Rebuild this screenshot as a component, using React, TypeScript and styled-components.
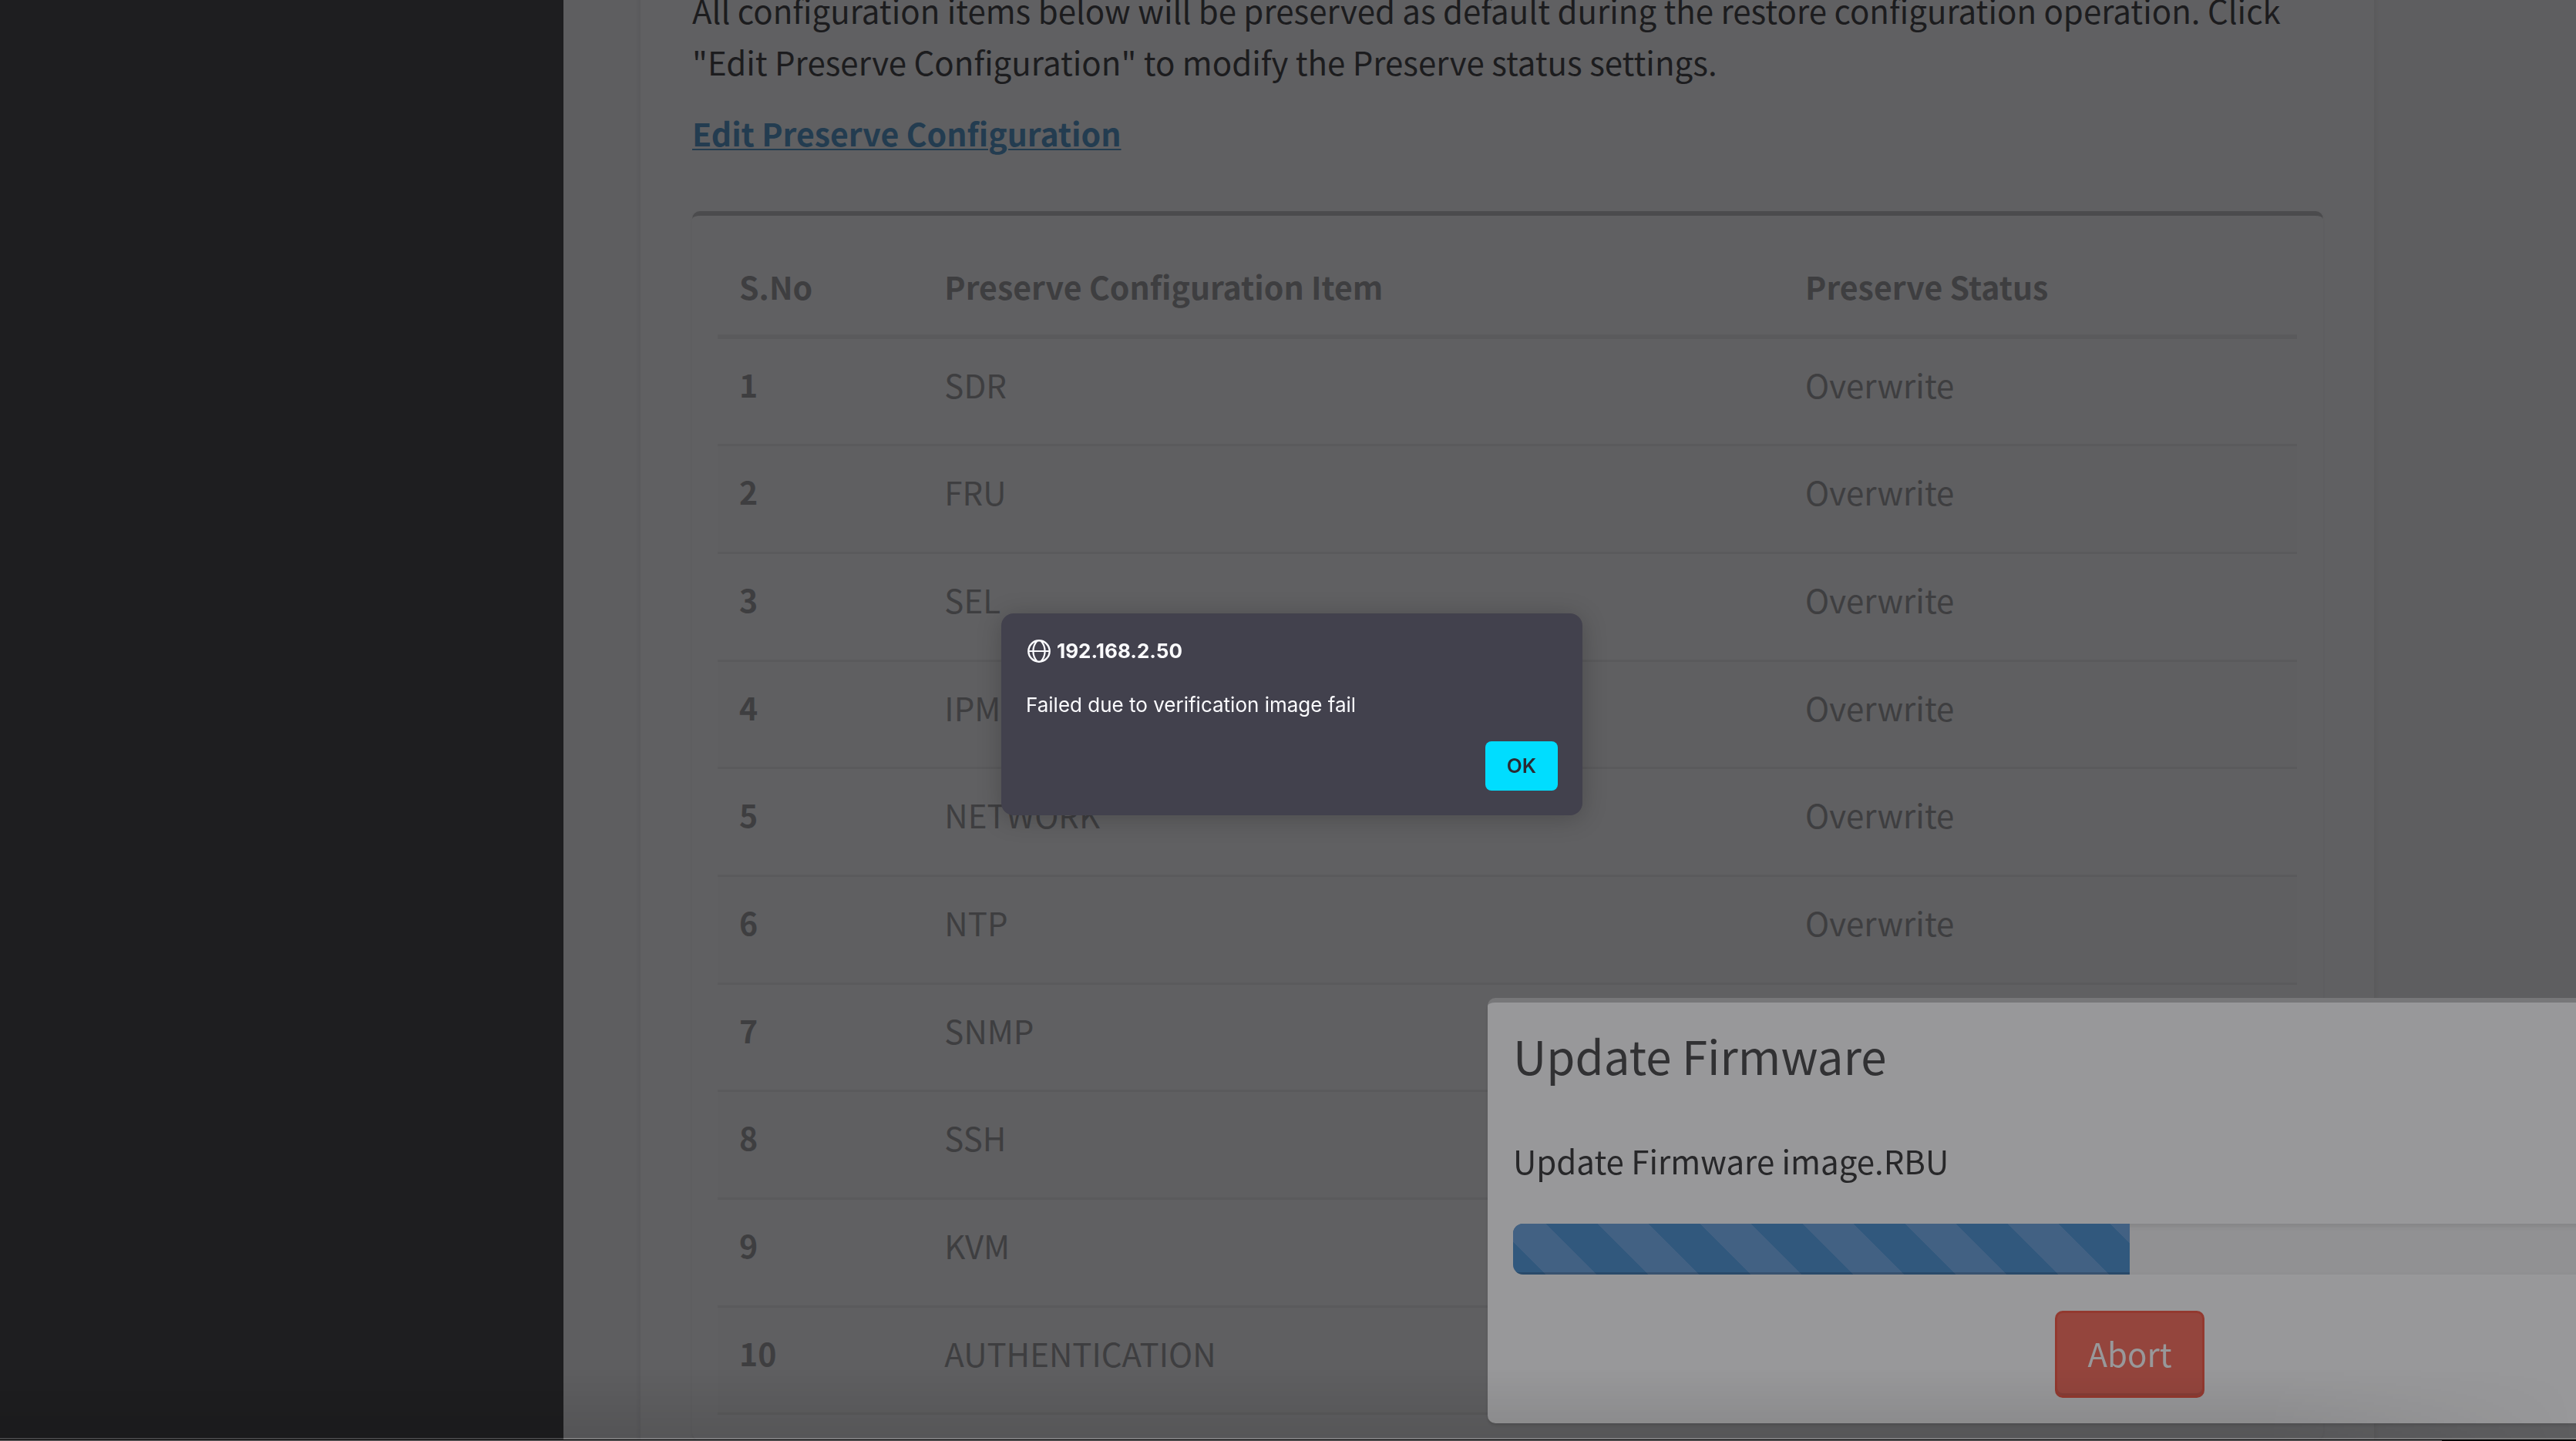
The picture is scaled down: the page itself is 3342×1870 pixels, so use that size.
import React from "react";
import styled, { createGlobalStyle } from "styled-components";

const GlobalStyle = createGlobalStyle`
  *, *::before, *::after { box-sizing: border-box; }
  html, body { margin: 0; overflow: hidden; background: #5e5e60; }
  body { font-family: "Noto Sans CJK JP", "Noto Sans CJK SC", "Open Sans", sans-serif; font-size: 42px; line-height: 67px; }
  p, h3 { margin: 0; font-weight: 400; }
`;

const Shell = styled.div`
  display: flex;
  height: 100vh;
  overflow: hidden;
`;

const Sidebar = styled.aside`
  flex: 0 0 731px;
  background: #1e1e20;
`;

const Content = styled.main`
  flex: 1;
  min-width: 0;
  padding: 0 262px 0 100px;
  background: #5e5e60;
`;

const Panel = styled.section`
  margin-top: -21px;
  padding: 0 66px 67px 67px;
  background: #606062;
  box-shadow: 0 3px 3px 3px #5b5b5d;
`;

const Description = styled.p`
  color: #1c1c1e;
`;

const EditLink = styled.a`
  display: inline-block;
  margin: 26px 0 68px;
  color: #233c50;
  font-size: 41px;
  font-weight: 700;
  text-decoration: underline;
  text-decoration-thickness: 2px;
  text-underline-offset: 3px;
`;

const Card = styled.div`
  padding: 33px 34px 33px 33px;
  border-top: 6px solid #4b4b4d;
  border-radius: 10px;
  background: #606062;
  box-shadow: 0 3px 3px #5c5c5e;
`;

const Table = styled.table`
  width: 100%;
  border-collapse: separate;
  border-spacing: 0;
  table-layout: fixed;
  color: #3e3e40;
  th { font-size: 41px; }
`;

const HeadCell = styled.th<{ $width: string }>`
  width: ${(p) => p.$width};
  height: 127px;
  padding: 25px 27px 0 28px;
  border-bottom: 6px solid #5a5a5c;
  text-align: left;
  vertical-align: top;
`;

const Row = styled.tr`
  height: 140px;
  &:nth-child(3n + 1) { height: 139px; }
  &:nth-child(even) { background: #5f5f61; }
  > * {
    padding: 25px 27px 0 28px;
    border-bottom: 3px solid #5a5a5c;
    text-align: left;
    vertical-align: top;
  }
`;

const UpdateCard = styled.section`
  position: fixed;
  left: 1930px;
  bottom: 23px;
  width: 1666px;
  padding: 34px 33px 33px;
  border-top: 6px solid #777779;
  border-radius: 10px;
  background: #98989a;
  box-shadow: 0 3px 3px rgba(0, 0, 0, 0.1);
`;

const UpdateTitle = styled.h3`
  color: #313133;
  font-size: 60px;
  line-height: 67px;
`;

const UpdateText = styled.p`
  margin: 70px 0 49px;
  color: #272729;
`;

const Track = styled.div`
  height: 66px;
  overflow: hidden;
  border-radius: 13px;
  background: #919193;
  box-shadow: inset 0 3px 6px rgba(0, 0, 0, 0.1);
`;

const Bar = styled.div`
  height: 100%;
  background-color: #31587d;
  background-image: linear-gradient(
    45deg,
    #426183 25%,
    transparent 25%,
    transparent 50%,
    #426183 50%,
    #426183 75%,
    transparent 75%
  );
  background-size: 133px 133px;
  background-position: -24px 0;
  box-shadow: inset 0 -3px 0 rgba(0, 0, 0, 0.15);
`;

const Actions = styled.div`
  display: flex;
  justify-content: center;
  margin-top: 47px;
`;

const AbortButton = styled.button`
  width: 194px;
  height: 113px;
  padding: 0 0 4px;
  border: 3px solid #93392f;
  border-radius: 10px;
  background: #94453d;
  box-shadow: inset 0 -3px 0 rgba(0, 0, 0, 0.09);
  color: #98989a;
  font: inherit;
`;

const Alert = styled.div`
  position: fixed;
  left: 1299px;
  top: 796px;
  width: 754px;
  padding: 33px 32px 32px;
  border-radius: 16px;
  background: #42414d;
  box-shadow: 0 4px 32px rgba(0, 0, 0, 0.22);
  color: #fbfbfe;
  font-family: Inter, "Liberation Sans", sans-serif;
  font-size: 26px;
  line-height: 32px;
`;

const AlertOrigin = styled.div`
  display: flex;
  align-items: center;
  gap: 8px;
  padding-left: 2px;
  font-weight: 700;
`;

const AlertMessage = styled.p`
  margin: 38px 0 31px;
`;

const AlertActions = styled.div`
  display: flex;
  justify-content: flex-end;
`;

const OkButton = styled.button`
  width: 94px;
  height: 64px;
  padding: 0;
  border: 0;
  border-radius: 8px;
  background: #00ddff;
  color: #2b2a33;
  font: inherit;
  font-weight: 600;
`;

const BottomShade = styled.div`
  position: fixed;
  inset: auto 0 4px 0;
  height: 90px;
  background: linear-gradient(to bottom, transparent, rgba(0, 0, 0, 0.1));
  mask-image: linear-gradient(to right, #000 88%, transparent);
  pointer-events: none;
`;

const WindowEdge = styled.div`
  position: fixed;
  inset: auto 0 0 0;
  height: 4px;
  border-top: 2px solid rgba(255, 255, 255, 0.17);
  background: linear-gradient(to right, #6c6a6c 3168px, #000 3168px) bottom / 100% 1px no-repeat padding-box,
    linear-gradient(#000, #000) padding-box;
  pointer-events: none;
`;

const items = ["SDR", "FRU", "SEL", "IPMI", "NETWORK", "NTP", "SNMP", "SSH", "KVM", "AUTHENTICATION"];

const GlobeIcon = () => (
  <svg width="30" height="30" viewBox="0 0 30 30" fill="none" stroke="currentColor" strokeWidth="2.4" aria-hidden="true">
    <circle cx="15" cy="15" r="13.7" />
    <path d="M1.5 15h27" strokeWidth="2" />
    <path d="M12.5 1.8C9 5.5 7.4 10 7.4 15s1.6 9.5 5.1 13.2M17.5 1.8C21 5.5 22.6 10 22.6 15s-1.6 9.5-5.1 13.2" strokeWidth="2.2" />
  </svg>
);

export default function App() {
  const progress = 50;
  return (
    <>
      <GlobalStyle />
      <Shell>
        <Sidebar />
        <Content>
          <Panel>
            <Description>
              All configuration items below will be preserved as default during the restore configuration operation. Click
              "Edit Preserve Configuration" to modify the Preserve status settings.
            </Description>
            <EditLink href="#preserve">Edit Preserve Configuration</EditLink>
            <Card>
              <Table>
                <thead>
                  <tr>
                    <HeadCell scope="col" $width="13%">S.No</HeadCell>
                    <HeadCell scope="col" $width="54.5%">Preserve Configuration Item</HeadCell>
                    <HeadCell scope="col" $width="32.5%">Preserve Status</HeadCell>
                  </tr>
                </thead>
                <tbody>
                  {items.map((item, i) => (
                    <Row key={item}>
                      <th scope="row">{i + 1}</th>
                      <td>{item}</td>
                      <td>Overwrite</td>
                    </Row>
                  ))}
                </tbody>
              </Table>
            </Card>
          </Panel>
        </Content>
      </Shell>

      <UpdateCard aria-labelledby="update-title">
        <UpdateTitle id="update-title">Update Firmware</UpdateTitle>
        <UpdateText>Update Firmware image.RBU</UpdateText>
        <Track role="progressbar" aria-label="Update progress" aria-valuenow={progress} aria-valuemin={0} aria-valuemax={100}>
          <Bar style={{ width: `${progress}%` }} />
        </Track>
        <Actions>
          <AbortButton type="button">Abort</AbortButton>
        </Actions>
      </UpdateCard>

      <BottomShade />
      <WindowEdge />

      <Alert role="alertdialog" aria-labelledby="alert-origin" aria-describedby="alert-message">
        <AlertOrigin id="alert-origin">
          <GlobeIcon />
          192.168.2.50
        </AlertOrigin>
        <AlertMessage id="alert-message">Failed due to verification image fail</AlertMessage>
        <AlertActions>
          <OkButton type="button">OK</OkButton>
        </AlertActions>
      </Alert>
    </>
  );
}
